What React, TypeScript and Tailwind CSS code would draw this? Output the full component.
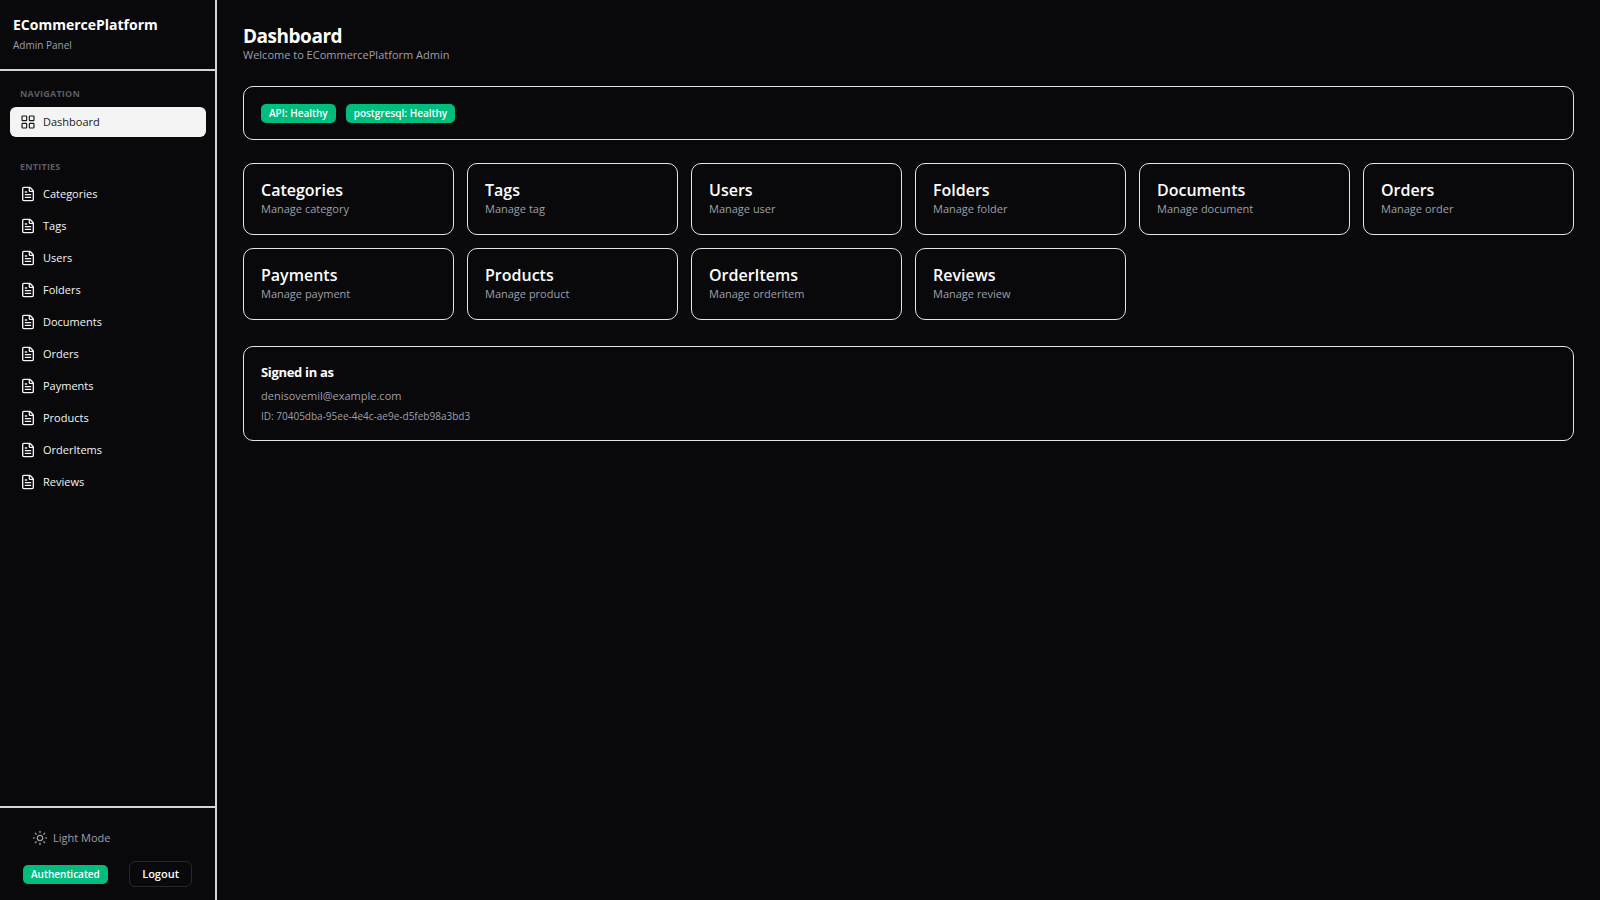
import { FileText, LayoutGrid, Sun } from "lucide-react";

const entities = [
  { name: "Categories", singular: "category" },
  { name: "Tags", singular: "tag" },
  { name: "Users", singular: "user" },
  { name: "Folders", singular: "folder" },
  { name: "Documents", singular: "document" },
  { name: "Orders", singular: "order" },
  { name: "Payments", singular: "payment" },
  { name: "Products", singular: "product" },
  { name: "OrderItems", singular: "orderitem" },
  { name: "Reviews", singular: "review" },
];

const Badge = ({ children }: { children: React.ReactNode }) => (
  <span className="flex h-[19px] items-center rounded-[5px] bg-[#00bc7d] px-2 text-[10px] font-semibold leading-none text-white">
    {children}
  </span>
);

const Sidebar = () => {
  return (
    <aside className="flex w-[217px] shrink-0 flex-col border-r-2 border-[#d4d4d4]">
      <header className="border-b-2 border-[#d4d4d4] px-[13px] pt-[15px] pb-4">
        <p className="text-[14px] leading-5 font-bold text-white">ECommercePlatform</p>
        <p className="mt-[2px] text-[10px] leading-4 text-[#9f9fa9]">Admin Panel</p>
      </header>

      <nav className="flex-1 pt-[15px] pr-[9px] pl-[10px]">
        <h2 className="px-[10px] text-[9px] leading-4 font-bold tracking-wide text-[#5c5c62]">NAVIGATION</h2>
        <a
          href="#dashboard"
          className="mt-[5px] flex h-[30px] items-center gap-[7px] rounded-md bg-[#f4f4f5] px-[10px] text-[11px] font-medium text-[#18181b]"
        >
          <LayoutGrid size={16} strokeWidth={1.75} />
          Dashboard
        </a>

        <h2 className="mt-[22px] px-[10px] text-[9px] leading-4 font-bold tracking-wide text-[#5c5c62]">ENTITIES</h2>
        <ul className="mt-[4px] flex flex-col gap-[2px]">
          {entities.map((entity) => (
            <li key={entity.name}>
              <a
                href={`#${entity.singular}`}
                className="flex h-[30px] items-center gap-[7px] rounded-md px-[10px] text-[11px] font-medium text-[#f4f4f5]"
              >
                <FileText size={16} />
                {entity.name}
              </a>
            </li>
          ))}
        </ul>
      </nav>

      <footer className="border-t-2 border-[#d4d4d4] px-[23px] pt-[17px] pb-[13px]">
        <button type="button" className="flex h-[26px] items-center gap-[5px] px-[9px] text-[11px] text-[#9f9fa9]">
          <Sun size={16} strokeWidth={1.75} />
          Light Mode
        </button>
        <div className="mt-[10px] flex items-center justify-between">
          <Badge>Authenticated</Badge>
          <button
            type="button"
            className="h-[26px] rounded-md border border-[#27272a] px-3 text-[11px] font-semibold text-white"
          >
            Logout
          </button>
        </div>
      </footer>
    </aside>
  );
};

const App = () => {
  return (
    <div className="flex min-h-screen bg-[#09090b] font-['Open_Sans','Noto_Sans',sans-serif] text-white">
      <Sidebar />

      <main className="min-w-0 flex-1 px-[26px] pt-[24px]">
        <h1 className="text-[19px] leading-6 font-bold tracking-tight">Dashboard</h1>
        <p className="text-[11px] leading-[14px] text-[#9f9fa9]">Welcome to ECommercePlatform Admin</p>

        <section className="mt-6 flex h-[54px] items-center gap-[10px] rounded-[10px] border border-[#e4e4e7] px-[17px]">
          <Badge>API: Healthy</Badge>
          <Badge>postgresql: Healthy</Badge>
        </section>

        <section className="mt-[23px] grid grid-cols-6 gap-[13px]">
          {entities.map((entity) => (
            <a
              key={entity.name}
              href={`#${entity.singular}`}
              className="rounded-[10px] border border-[#e4e4e7] px-[17px] pt-[14px] pb-[18px]"
            >
              <h3 className="text-[16px] leading-6 font-semibold">{entity.name}</h3>
              <p className="text-[11px] leading-[14px] text-[#9f9fa9]">Manage {entity.singular}</p>
            </a>
          ))}
        </section>

        <section className="mt-[26px] rounded-[10px] border border-[#e4e4e7] px-[17px] pt-[15px] pb-4">
          <h2 className="text-[13px] leading-5 font-bold tracking-tight">Signed in as</h2>
          <p className="mt-[6px] text-[11px] leading-4 text-[#9f9fa9]">denisovemil@example.com</p>
          <p className="mt-[4px] text-[10px] leading-4 text-[#9f9fa9]">ID: 70405dba-95ee-4e4c-ae9e-d5feb98a3bd3</p>
        </section>
      </main>
    </div>
  );
};

export default App;
